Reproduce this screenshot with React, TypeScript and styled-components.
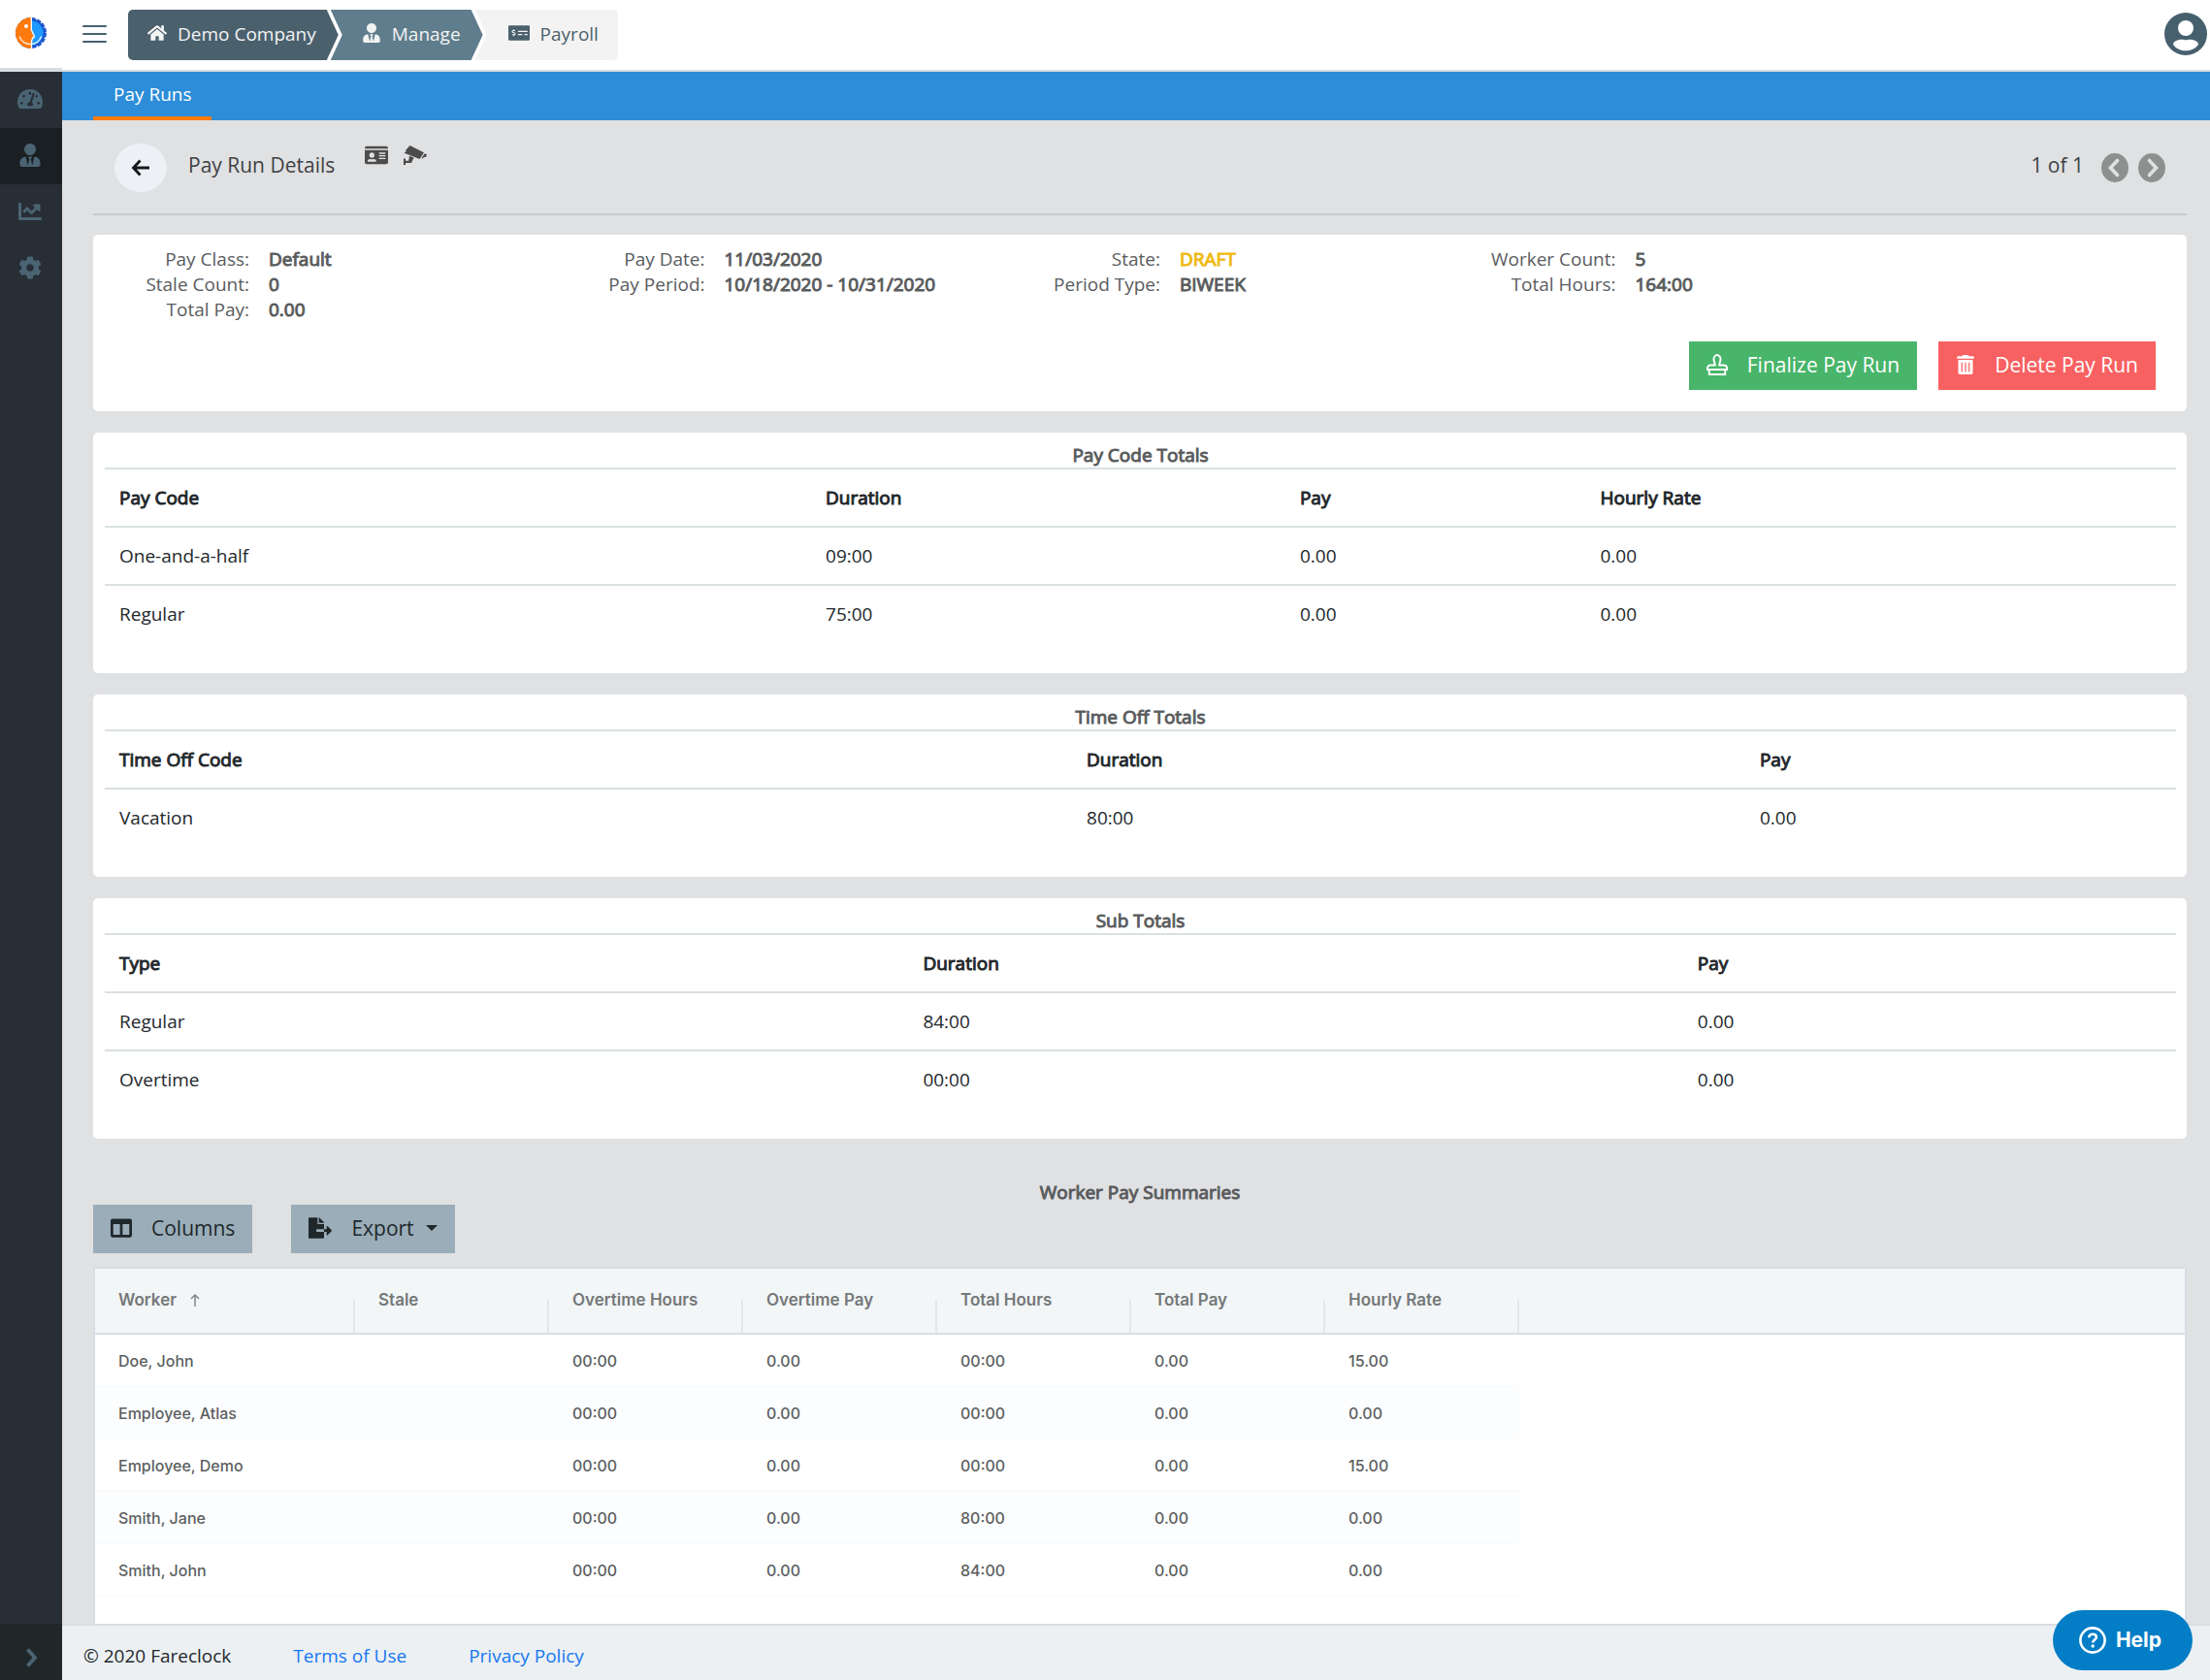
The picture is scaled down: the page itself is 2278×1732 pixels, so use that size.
import React from "react";
import styled, { createGlobalStyle, css } from "styled-components";
import {
  FaChartLine,
  FaCog,
  FaColumns,
  FaFileExport,
  FaHome,
  FaIdCard,
  FaMoneyCheckAlt,
  FaTachometerAlt,
  FaTrashAlt,
  FaUserTie,
} from "react-icons/fa";

const GlobalStyle = createGlobalStyle`
  *, *::before, *::after { box-sizing: border-box; }
  body {
    margin: 0;
    background: #e0e1e3;
    color: #23282c;
    font-family: "Open Sans", "Noto Sans", sans-serif;
    font-size: 19px;
    line-height: 26px;
  }
  button { font: inherit; border: 0; cursor: pointer; }
  a { text-decoration: none; }
  svg { display: block; flex: none; }
`;

/* Headings and values are drawn with a stroked regular weight. */
const heavy = css`
  font-weight: 400;
  -webkit-text-stroke: 1px currentColor;
`;

const Shell = styled.div`
  min-height: 100vh;
  display: grid;
  grid-template-columns: 64px minmax(0, 1fr);
  grid-template-rows: auto 1fr auto;
`;

const TopBar = styled.header`
  grid-column: 1 / -1;
  height: 74px;
  display: flex;
  align-items: flex-start;
  background: #fff;
  border-bottom: 2px solid #d8dde1;
`;

const Brand = styled.a`
  width: 64px;
  height: 72px;
  padding: 18px 16px 0;
  border-bottom: 2px solid #d8dde1;
`;

const MenuButton = styled.button`
  margin: 23px 22px 0 21px;
  padding: 0;
  background: none;
  color: #47616f;
`;

const Crumbs = styled.nav`
  display: flex;
  height: 52px;
  margin-top: 10px;
  border-radius: 5px;
  overflow: hidden;
`;

const Crumb = styled.a<{ $tone: "dark" | "mid" | "light" }>`
  display: flex;
  align-items: center;
  gap: 11px;
  color: #f3f3f3;
  ${({ $tone }) =>
    $tone === "dark" &&
    css`
      padding: 0 23px 2px 20px;
      background: #4a606d;
      clip-path: polygon(0 0, calc(100% - 12px) 0, 100% 50%, calc(100% - 12px) 100%, 0 100%);
    `}
  ${({ $tone }) =>
    $tone === "mid" &&
    css`
      padding: 0 23px 2px 32px;
      margin-left: -8px;
      background: #5f7d8c;
      clip-path: polygon(0 0, calc(100% - 12px) 0, 100% 50%, calc(100% - 12px) 100%, 0 100%, 12px 50%);
    `}
  ${({ $tone }) =>
    $tone === "light" &&
    css`
      padding: 0 20px 2px 34px;
      margin-left: -8px;
      background: #f3f3f3;
      color: #4a606d;
      clip-path: polygon(0 0, 100% 0, 100% 100%, 0 100%, 12px 50%);
    `}
  svg { margin-bottom: 2px; }
`;

const AccountButton = styled.button`
  margin: 13px 3px 0 auto;
  padding: 0;
  background: none;
  color: #47606e;
`;

const SideBar = styled.nav`
  grid-row: 2 / 4;
  display: flex;
  flex-direction: column;
  background: #272e35;
`;

const SideLink = styled.a<{ $active?: boolean }>`
  height: 58px;
  display: flex;
  align-items: center;
  justify-content: center;
  padding: 0 2px 2px 0;
  color: #4b6473;
  background: ${({ $active }) => ($active ? "#1a1f23" : "transparent")};
`;

const Expand = styled.button`
  height: 58px;
  margin-top: auto;
  padding: 12px 0 0 2px;
  display: flex;
  align-items: center;
  justify-content: center;
  background: #1f2729;
  color: #4b6473;
`;

const Main = styled.main`
  display: flex;
  flex-direction: column;
  min-width: 0;
`;

const TabBar = styled.nav`
  display: flex;
  height: 50px;
  padding-left: 32px;
  background: #2d8dd8;
`;

const Tab = styled.a`
  display: flex;
  align-items: center;
  padding: 0 20px 0 21px;
  color: #fff;
  border-bottom: 4px solid #ff7a0a;
`;

const Content = styled.div`
  flex: 1;
  display: flex;
  flex-direction: column;
  padding: 0 24px 0 32px;
`;

const PageHead = styled.div`
  display: flex;
  align-items: center;
  padding: 24px 22px 22px;
  border-bottom: 2px solid #c9cacc;
  margin-bottom: 20px;
  font-size: 21px;
  color: #3f4143;
`;

const BackButton = styled.button`
  width: 54px;
  height: 50px;
  display: flex;
  align-items: center;
  justify-content: center;
  border-radius: 27px / 25px;
  background: #edf1f5;
  color: #16191c;
`;

const PageTitle = styled.h1`
  margin: 0 31px 0 22px;
  padding-bottom: 6px;
  font-size: 21px;
  font-weight: 400;
`;

const HeadIcons = styled.div`
  align-self: flex-start;
  height: 24px;
  display: flex;
  align-items: center;
  gap: 16px;
  color: #4c4c4c;
`;

const Pager = styled.div`
  margin-left: auto;
  display: flex;
  align-items: center;
  gap: 10px;
  button { padding: 0; background: none; color: #8e9090; }
`;

const PagerText = styled.span`
  padding: 0 8px 6px 0;
`;

const Card = styled.section<{ $table?: boolean }>`
  margin-bottom: 22px;
  border-radius: 5px;
  background: #fff;
  padding: ${({ $table }) => ($table ? "10px 11px 32px 12px" : "12px 0 22px")};
`;

const Facts = styled.div`
  display: grid;
  grid-template-columns: repeat(4, 1fr);
  padding-right: 280px;
  margin-bottom: 20px;
  color: #5a5c5e;
`;

const FactList = styled.dl`
  margin: 0;
  display: grid;
  grid-template-columns: 161px 1fr;
  column-gap: 20px;
  align-content: start;
`;

const FactLabel = styled.dt`
  text-align: right;
`;

const FactValue = styled.dd<{ $draft?: boolean }>`
  margin: 0;
  ${heavy}
  color: ${({ $draft }) => ($draft ? "#f0b90e" : "#5a5c5e")};
`;

const Actions = styled.div`
  display: flex;
  justify-content: flex-end;
  gap: 22px;
  padding-right: 32px;
`;

const ActionButton = styled.button<{ $tone: "green" | "red" | "slate" }>`
  height: 50px;
  display: flex;
  align-items: center;
  gap: 20px;
  padding: 0 18px 2px;
  font-size: 21px;
  color: ${({ $tone }) => ($tone === "slate" ? "#20272b" : "#fff")};
  background: ${({ $tone }) => ({ green: "#48b56a", red: "#f86161", slate: "#9aadb8" })[$tone]};
`;

const SectionTitle = styled.h2`
  margin: 0;
  font-size: 19px;
  line-height: 26px;
  text-align: center;
  color: #5a5c5e;
  ${heavy}
`;

const TotalsTable = styled.table`
  width: 100%;
  table-layout: fixed;
  border-spacing: 0;
  th, td {
    padding: 16px 15px;
    border-top: 2px solid #dae0e3;
    text-align: left;
  }
  th { ${heavy} }
`;

const ShareCol = styled.col<{ $share?: number }>`
  width: ${({ $share }) => ($share ? `${$share}%` : "auto")};
`;

const Summaries = styled.section`
  flex: 1;
  display: flex;
  flex-direction: column;
  padding-top: 20px;
`;

const Tools = styled.div`
  display: flex;
  gap: 40px;
  margin-bottom: 14px;
`;

const Caret = styled.span`
  margin-left: -8px;
  border: 6px solid transparent;
  border-top-color: currentColor;
  border-bottom: 0;
`;

const GridBox = styled.div`
  flex: 1;
  background: #fff;
  border: 2px solid #d9dee5;
  border-bottom: 0;
  font-family: Inter, "Liberation Sans", sans-serif;
  font-size: 16px;
`;

const Grid = styled.table`
  width: 100%;
  table-layout: fixed;
  border-spacing: 0;
`;

const FirstCol = styled.col`
  width: 268px;
`;

const DataCol = styled.col`
  width: 200px;
`;

const HeadCell = styled.th`
  height: 68px;
  padding: 0 0 2px 24px;
  text-align: left;
  font-size: 17px;
  font-weight: 600;
  color: #757879;
  background: linear-gradient(#e3e7ea, #e3e7ea) right bottom / 2px 34px no-repeat #f2f6f7;
  border-bottom: 2px solid #d9dee5;
  svg { display: inline-block; margin-left: 14px; vertical-align: -1px; }
`;

const HeadFiller = styled.td`
  background: #f2f6f7;
  border-bottom: 2px solid #d9dee5;
`;

const GridRow = styled.tr`
  td {
    height: 54px;
    padding: 2px 0 0 24px;
    font-weight: 500;
    color: #5c5f61;
    border-bottom: 2px solid #fafbfc;
  }
  &:nth-child(even) td { background: #fcfdfe; }
  td:last-child { background: #fff; border-color: #fff; }
`;

const Footer = styled.footer`
  height: 58px;
  display: flex;
  align-items: center;
  gap: 64px;
  padding: 6px 0 0 22px;
  background: #ecf0f3;
  border-top: 2px solid #d9dde1;
  a { color: #1677f2; }
`;

const HelpButton = styled.button`
  position: fixed;
  right: 18px;
  bottom: 10px;
  width: 144px;
  height: 62px;
  display: flex;
  align-items: center;
  justify-content: center;
  gap: 10px;
  padding: 0 5px 0 0;
  border-radius: 31px;
  background: #027dc6;
  color: #fff;
  font-family: Inter, "Liberation Sans", sans-serif;
  font-size: 21px;
  font-weight: 700;
`;

const Logo = () => (
  <svg width="32" height="32" viewBox="0 0 32 32" aria-hidden="true">
    <circle cx="16" cy="16" r="14.600" fill="#1c57cf" />
    <circle cx="16" cy="16" r="15" fill="none" stroke="#1c57cf" strokeWidth="2" strokeDasharray="4.500 1.400" />
    <path d="M16 3.5a12.500 12.500 0 0 1 0 25z" fill="#1f9aff" />
    <path d="M16 0a16 16 0 0 0 0 32z" fill="#ff7a0c" />
    <path d="M15 4v8l4 8.200c.3.900-.4 1.300-1.800 1.300v3.500H14V4z" fill="#ff7a0c" />
    <path d="M16.300 0v12.500l3 6.700c.4 1-.2 1.700-1.800 1.800l-1 3.500V32" fill="none" stroke="#fff" strokeWidth="1.300" />
    <path d="M4 19.500c2.200 5.300 6.600 8.200 11.500 8 5.500 0 9.500-3.500 11-8" fill="none" stroke="#fff" strokeWidth="1.400" opacity=".85" />
    <circle cx="11" cy="9" r="2" fill="#fff" />
  </svg>
);

const MenuIcon = () => (
  <svg width="25" height="24" viewBox="0 0 25 24" aria-hidden="true">
    <path d="M1 4h23M1 12h23M1 20h23" stroke="currentColor" strokeWidth="2" strokeLinecap="round" />
  </svg>
);

const AccountIcon = () => (
  <svg width="44" height="44" viewBox="0 0 44 44" aria-hidden="true">
    <circle cx="22" cy="22" r="22" fill="currentColor" />
    <circle cx="22" cy="16" r="8" fill="#fff" />
    <path
      d="M9 33c0-3.500 5-5.300 9-5.300 2 0 2.500.6 4 .6s2-.6 4-.6c4 0 9 1.800 9 5.300-3.500 4.500-8 6.300-13 6.300S12.500 37.500 9 33z"
      fill="#fff"
    />
  </svg>
);

const ArrowLeftIcon = () => (
  <svg width="20" height="18" viewBox="0 0 20 18" aria-hidden="true">
    <path d="M9.500 1.500 2.500 9l7 7.500M3 9h16" fill="none" stroke="currentColor" strokeWidth="2.800" />
  </svg>
);

const CameraIcon = () => (
  <svg width="24" height="20" viewBox="0 0 24 20" fill="currentColor" aria-hidden="true">
    <path d="M6.500 0 21 7.300 16.500 14 .6 7.800 3 5.800 1.800 5.200z" />
    <path d="m21.800 8.300 2.200 1-1 2.600h-2l-1.300 1.700-1.200-.6z" />
    <path d="M6 10.800 10.600 12.600 8 18H2v2H0v-6.600h2v2.400h3.200z" />
  </svg>
);

const StampIcon = () => (
  <svg width="22" height="22" viewBox="0 0 22 22" fill="none" stroke="currentColor" strokeWidth="2" aria-hidden="true">
    <path d="M8.800 11.500c0-2-1.300-3.500-1.300-6.200a3.500 4.300 0 0 1 7 0c0 2.700-1.300 4.200-1.300 6.200H18a3 3 0 0 1 3 3V16H1v-1.500a3 3 0 0 1 3-3z" />
    <path d="M2.800 16v5h16.400v-5" />
  </svg>
);

const PagerIcon = ({ next }: { next?: boolean }) => (
  <svg width="28" height="30" viewBox="0 0 28 30" aria-hidden="true">
    <ellipse cx="14" cy="15" rx="14" ry="15" fill="currentColor" />
    <path
      d={next ? "M11.500 7.500 18.500 15l-7 7.500" : "M16.500 7.500 9.500 15l7 7.500"}
      fill="none"
      stroke="#e0e1e3"
      strokeWidth="3.600"
      strokeLinecap="round"
    />
  </svg>
);

const ExpandIcon = () => (
  <svg width="12" height="20" viewBox="0 0 12 20" aria-hidden="true">
    <path d="m1.500 1.500 7.500 8.500-7.500 8.500" fill="none" stroke="currentColor" strokeWidth="3.800" />
  </svg>
);

const SortUpIcon = () => (
  <svg width="10" height="13" viewBox="0 0 10 13" aria-hidden="true">
    <path d="M5 13V1M1 5l4-4 4 4" fill="none" stroke="#7f8a8e" strokeWidth="1.500" />
  </svg>
);

const HelpIcon = () => (
  <svg width="28" height="28" viewBox="0 0 28 28" fill="none" stroke="#fff" aria-hidden="true">
    <circle cx="14" cy="14" r="12.600" strokeWidth="2.600" />
    <path d="M10.200 11.300c0-2.200 1.700-3.500 3.900-3.500 2.100 0 3.800 1.200 3.800 3.200 0 2.500-3.700 2.700-3.700 5.500" strokeWidth="2.600" />
    <circle cx="14.200" cy="20" r="1.700" fill="#fff" stroke="none" />
  </svg>
);

type Fact = { label: string; value: string; draft?: boolean };

const facts: Fact[][] = [
  [
    { label: "Pay Class:", value: "Default" },
    { label: "Stale Count:", value: "0" },
    { label: "Total Pay:", value: "0.00" },
  ],
  [
    { label: "Pay Date:", value: "11/03/2020" },
    { label: "Pay Period:", value: "10/18/2020 - 10/31/2020" },
  ],
  [
    { label: "State:", value: "DRAFT", draft: true },
    { label: "Period Type:", value: "BIWEEK" },
  ],
  [
    { label: "Worker Count:", value: "5" },
    { label: "Total Hours:", value: "164:00" },
  ],
];

/* shares: column widths in percent; the last column takes the rest. */
const totals = [
  {
    title: "Pay Code Totals",
    shares: [34.1, 22.9, 14.5],
    head: ["Pay Code", "Duration", "Pay", "Hourly Rate"],
    rows: [
      ["One-and-a-half", "09:00", "0.00", "0.00"],
      ["Regular", "75:00", "0.00", "0.00"],
    ],
  },
  {
    title: "Time Off Totals",
    shares: [46.7, 32.5],
    head: ["Time Off Code", "Duration", "Pay"],
    rows: [["Vacation", "80:00", "0.00"]],
  },
  {
    title: "Sub Totals",
    shares: [38.8, 37.4],
    head: ["Type", "Duration", "Pay"],
    rows: [
      ["Regular", "84:00", "0.00"],
      ["Overtime", "00:00", "0.00"],
    ],
  },
];

const gridHead = ["Worker", "Stale", "Overtime Hours", "Overtime Pay", "Total Hours", "Total Pay", "Hourly Rate"];

const workers = [
  ["Doe, John", "", "00:00", "0.00", "00:00", "0.00", "15.00"],
  ["Employee, Atlas", "", "00:00", "0.00", "00:00", "0.00", "0.00"],
  ["Employee, Demo", "", "00:00", "0.00", "00:00", "0.00", "15.00"],
  ["Smith, Jane", "", "00:00", "0.00", "80:00", "0.00", "0.00"],
  ["Smith, John", "", "00:00", "0.00", "84:00", "0.00", "0.00"],
];

export default function App() {
  return (
    <>
      <GlobalStyle />
      <Shell>
        <TopBar>
          <Brand href="#" aria-label="Fareclock">
            <Logo />
          </Brand>
          <MenuButton aria-label="Menu">
            <MenuIcon />
          </MenuButton>
          <Crumbs aria-label="Breadcrumb">
            <Crumb href="#" $tone="dark">
              <FaHome size={20} />
              Demo Company
            </Crumb>
            <Crumb href="#" $tone="mid">
              <FaUserTie size={20} />
              Manage
            </Crumb>
            <Crumb href="#" $tone="light">
              <FaMoneyCheckAlt size={22} />
              Payroll
            </Crumb>
          </Crumbs>
          <AccountButton aria-label="Account">
            <AccountIcon />
          </AccountButton>
        </TopBar>

        <SideBar aria-label="Sections">
          <SideLink href="#" aria-label="Dashboard">
            <FaTachometerAlt size={26} />
          </SideLink>
          <SideLink href="#" aria-label="Manage" $active>
            <FaUserTie size={24} />
          </SideLink>
          <SideLink href="#" aria-label="Reports">
            <FaChartLine size={24} />
          </SideLink>
          <SideLink href="#" aria-label="Settings">
            <FaCog size={24} />
          </SideLink>
          <Expand aria-label="Expand">
            <ExpandIcon />
          </Expand>
        </SideBar>

        <Main>
          <TabBar>
            <Tab href="#">Pay Runs</Tab>
          </TabBar>
          <Content>
            <PageHead>
              <BackButton aria-label="Back">
                <ArrowLeftIcon />
              </BackButton>
              <PageTitle>Pay Run Details</PageTitle>
              <HeadIcons>
                <FaIdCard size={24} />
                <CameraIcon />
              </HeadIcons>
              <Pager>
                <PagerText>1 of 1</PagerText>
                <button aria-label="Previous">
                  <PagerIcon />
                </button>
                <button aria-label="Next">
                  <PagerIcon next />
                </button>
              </Pager>
            </PageHead>

            <Card>
              <Facts>
                {facts.map((group) => (
                  <FactList key={group[0].label}>
                    {group.map((fact) => (
                      <React.Fragment key={fact.label}>
                        <FactLabel>{fact.label}</FactLabel>
                        <FactValue $draft={fact.draft}>{fact.value}</FactValue>
                      </React.Fragment>
                    ))}
                  </FactList>
                ))}
              </Facts>
              <Actions>
                <ActionButton $tone="green">
                  <StampIcon />
                  Finalize Pay Run
                </ActionButton>
                <ActionButton $tone="red">
                  <FaTrashAlt size={20} />
                  Delete Pay Run
                </ActionButton>
              </Actions>
            </Card>

            {totals.map((table) => (
              <Card key={table.title} $table>
                <SectionTitle>{table.title}</SectionTitle>
                <TotalsTable>
                  <colgroup>
                    {table.head.map((name, i) => (
                      <ShareCol key={name} $share={table.shares[i]} />
                    ))}
                  </colgroup>
                  <thead>
                    <tr>
                      {table.head.map((name) => (
                        <th key={name}>{name}</th>
                      ))}
                    </tr>
                  </thead>
                  <tbody>
                    {table.rows.map((row) => (
                      <tr key={row[0]}>
                        {row.map((value, i) => (
                          <td key={i}>{value}</td>
                        ))}
                      </tr>
                    ))}
                  </tbody>
                </TotalsTable>
              </Card>
            ))}

            <Summaries>
              <SectionTitle>Worker Pay Summaries</SectionTitle>
              <Tools>
                <ActionButton $tone="slate">
                  <FaColumns size={22} />
                  Columns
                </ActionButton>
                <ActionButton $tone="slate">
                  <FaFileExport size={24} />
                  Export
                  <Caret />
                </ActionButton>
              </Tools>
              <GridBox>
                <Grid>
                  <colgroup>
                    <FirstCol />
                    {gridHead.slice(1).map((name) => (
                      <DataCol key={name} />
                    ))}
                    <col />
                  </colgroup>
                  <thead>
                    <tr>
                      {gridHead.map((name, i) => (
                        <HeadCell key={name}>
                          {name}
                          {i === 0 && <SortUpIcon />}
                        </HeadCell>
                      ))}
                      <HeadFiller />
                    </tr>
                  </thead>
                  <tbody>
                    {workers.map((row) => (
                      <GridRow key={row[0]}>
                        {row.map((value, i) => (
                          <td key={i}>{value}</td>
                        ))}
                        <td />
                      </GridRow>
                    ))}
                  </tbody>
                </Grid>
              </GridBox>
            </Summaries>
          </Content>
        </Main>

        <Footer>
          <span>© 2020 Fareclock</span>
          <a href="#">Terms of Use</a>
          <a href="#">Privacy Policy</a>
        </Footer>
      </Shell>
      <HelpButton>
        <HelpIcon />
        Help
      </HelpButton>
    </>
  );
}
